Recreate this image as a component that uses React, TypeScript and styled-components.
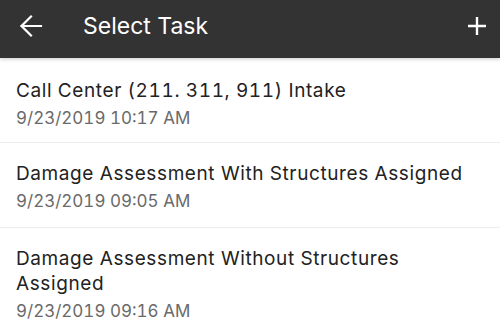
import React from "react"
import styled, { createGlobalStyle } from "styled-components"

const GlobalStyle = createGlobalStyle`
  html, body {
    margin: 0;
    padding: 0;
    background: #ffffff;
  }
  body {
    font-family: Inter, "Liberation Sans", Arial, sans-serif;
  }
`

interface ITask {
  title: string
  date: string
}

const tasks: ITask[] = [
  { title: "Call Center (211. 311, 911) Intake", date: "9/23/2019 10:17 AM" },
  {
    title: "Damage Assessment With Structures Assigned",
    date: "9/23/2019 09:05 AM"
  },
  {
    title: "Damage Assessment Without Structures Assigned",
    date: "9/23/2019 09:16 AM"
  }
]

const BackIcon = () => (
  <svg width="24" height="24" viewBox="0 0 24 24" fill="none">
    <path
      d="M2.5 12H22M12 2.5L2.5 12L12 21.5"
      stroke="#ffffff"
      strokeWidth="2.2"
      strokeLinecap="square"
    />
  </svg>
)

const PlusIcon = () => (
  <svg width="20" height="20" viewBox="0 0 20 20" fill="none">
    <path d="M1 10H19M10 1V19" stroke="#ffffff" strokeWidth="2.4" />
  </svg>
)

export default function App() {
  return (
    <>
      <GlobalStyle />
      <Screen>
        <Toolbar>
          <IconButton aria-label="Back">
            <BackIcon />
          </IconButton>
          <ToolbarTitle>Select Task</ToolbarTitle>
          <IconButton aria-label="Add">
            <PlusIcon />
          </IconButton>
        </Toolbar>
        <TaskList>
          {tasks.map((task) => (
            <TaskRow key={task.title}>
              <TaskTitle>{task.title}</TaskTitle>
              <TaskDate>{task.date}</TaskDate>
            </TaskRow>
          ))}
        </TaskList>
      </Screen>
    </>
  )
}

const Screen = styled.div`
  width: 500px;
  height: 334px;
  overflow: hidden;
  background: #ffffff;
  display: flex;
  flex-direction: column;
`

const Toolbar = styled.header`
  position: relative;
  z-index: 1;
  height: 58px;
  box-sizing: border-box;
  padding: 0 11px 6px 19px;
  display: flex;
  align-items: center;
  background: #333333;
  box-shadow: 0 1px 4px rgba(0, 0, 0, 0.22);
  flex-shrink: 0;
`

const IconButton = styled.button`
  display: flex;
  align-items: center;
  justify-content: center;
  padding: 0;
  border: 0;
  background: transparent;
  width: 24px;
  height: 24px;
  cursor: pointer;
`

const ToolbarTitle = styled.h1`
  flex: 1;
  margin: 0 0 0 40px;
  font-size: 23px;
  font-weight: 400;
  line-height: 28px;
  color: #ffffff;
`

const TaskList = styled.ul`
  list-style: none;
  margin: 0;
  padding: 0;
`

const TaskRow = styled.li`
  padding: 18px 16px 13px;
  border-bottom: 1px solid #ececec;

  &:first-child {
    padding-top: 20px;
    padding-bottom: 11px;
  }
`

const TaskTitle = styled.div`
  font-size: 19px;
  line-height: 25px;
  letter-spacing: 0.6px;
  font-variant-numeric: tabular-nums;
  color: #222222;
`

const TaskDate = styled.div`
  margin-top: 2px;
  font-size: 17px;
  line-height: 26px;
  font-variant-numeric: tabular-nums;
  color: #6a6a6a;
`
